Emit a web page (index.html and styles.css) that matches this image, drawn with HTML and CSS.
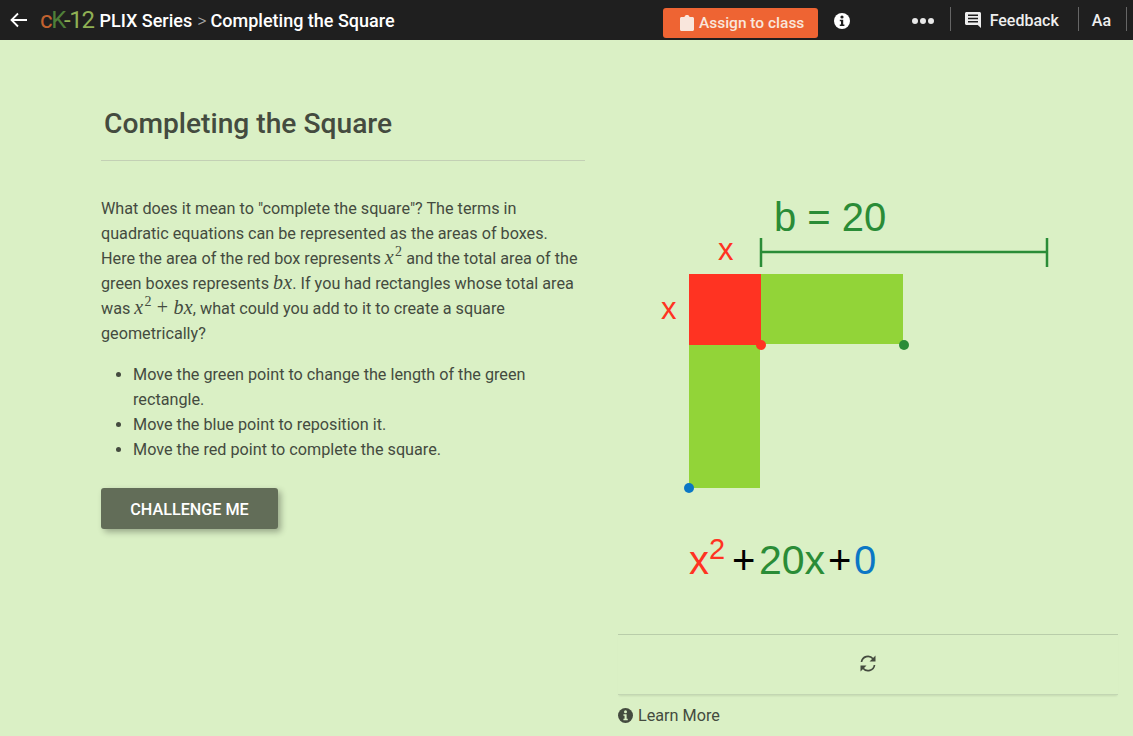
FILE: index.html
```html
<!DOCTYPE html>
<html lang="en">
<head>
  <meta charset="UTF-8" />
  <meta name="viewport" content="width=device-width, initial-scale=1.0"/>
  <title>Completing the Square</title>
  <link rel="stylesheet" href="styles.css">
</head>
<body>
  <header class="topbar">
    <svg class="back" width="18" height="16" viewBox="0 0 18 16"><path d="M17 8H2M8 1.500L1.500 8 8 14.500" fill="none" stroke="#fff" stroke-width="1.800"/></svg>
    <span class="logo"><span class="logo-c">c</span><span class="logo-k">K</span><span class="logo-num">-12</span></span>
    <span class="crumb">PLIX Series</span>
    <span class="crumb-sep">&gt;</span>
    <span class="crumb">Completing the Square</span>

    <div class="actions">
      <button class="assign">
        <svg width="14" height="16" viewBox="0 0 14 16"><path d="M1.500 2H4.500C4.700 .6 5.700 0 7 0s2.300 .6 2.500 2H12.500C13.300 2 14 2.700 14 3.500V14.500C14 15.300 13.300 16 12.500 16H1.500C.7 16 0 15.300 0 14.500V3.500C0 2.700 .7 2 1.500 2Z" fill="#f9e6dc"/></svg>
        Assign to class
      </button>
      <svg class="info" width="16" height="16" viewBox="0 0 16 16"><circle cx="8" cy="8" r="8" fill="#fff"/><circle cx="8" cy="4" r="1.600" fill="#1f1f1f"/><path d="M5.800 6.700H9.200V11.500H10.400V13H5.800V11.500H7V8.200H5.800Z" fill="#1f1f1f"/></svg>
      <span class="dots"><i></i><i></i><i></i></span>
      <span class="divider"></span>
      <svg class="fb-icon" width="16" height="16" viewBox="0 0 16 16"><path d="M1.500 0H14.500C15.300 0 16 .7 16 1.500V16L12.800 13H1.500C.7 13 0 12.300 0 11.500V1.500C0 .7 .7 0 1.500 0Z" fill="#eee"/><path d="M3 3.200H13M3 6.500H13M3 9.800H13" stroke="#1f1f1f" stroke-width="1.500"/></svg>
      <span class="action-text feedback">Feedback</span>
      <span class="divider second"></span>
      <span class="action-text font-size">Aa</span>
      <span class="divider last"></span>
    </div>
  </header>

  <main class="page">
    <section class="lesson">
      <h1>Completing the Square</h1>
      <p>What does it mean to "complete the square"? The terms in quadratic equations can be represented as the areas of boxes. Here the area of the red box represents <span class="math">x<sup>2</sup></span> and the total area of the green boxes represents <span class="math">bx</span>. If you had rectangles whose total area was <span class="math">x<sup>2</sup> <span class="op">+</span> bx</span>, what could you add to it to create a square geometrically?</p>
      <ul>
        <li>Move the green point to change the length of the green rectangle.</li>
        <li>Move the blue point to reposition it.</li>
        <li>Move the red point to complete the square.</li>
      </ul>
      <button class="challenge">CHALLENGE ME</button>
    </section>

    <section class="widget">
      <svg class="diagram" width="500" height="400" viewBox="0 0 500 400">
        <text class="label-b" x="156" y="41">b = 20</text>
        <path d="M143 62H429M143 48V77M429 48V77" fill="none" stroke="#2a8c37" stroke-width="2.500"/>
        <text class="label-x" x="100" y="70">x</text>
        <text class="label-x" x="43" y="129">x</text>
        <rect x="143" y="84" width="142" height="70" fill="#92d438"/>
        <rect x="71" y="155" width="71" height="143" fill="#92d438"/>
        <rect x="71" y="84" width="72" height="71" fill="#ff3322"/>
        <circle cx="143" cy="155" r="5" fill="#ff3322"/>
        <circle cx="286" cy="155" r="5" fill="#2a8c37"/>
        <circle cx="71" cy="298" r="5" fill="#0b77c5"/>
        <text class="eq" y="384">
          <tspan x="71" fill="#ff3322">x</tspan>
          <tspan x="91" y="369" class="eq-sup" fill="#ff3322">2</tspan>
          <tspan x="114" y="384" fill="#000">+</tspan>
          <tspan x="141" class="eq-mid" fill="#2a8c37">20x</tspan>
          <tspan x="210" fill="#000">+</tspan>
          <tspan x="236" fill="#0b77c5">0</tspan>
        </text>
      </svg>
      <div class="reset-row">
        <svg width="18" height="17" viewBox="0 0 18 17"><path d="M2.500 7A6.500 6.500 0 0 1 14 3.800M15.500 10A6.500 6.500 0 0 1 4 13.200" fill="none" stroke="#444b3f" stroke-width="1.700"/><path d="M16.500 .5V6.500H10.500ZM1.500 16.500V10.500H7.500Z" fill="#444b3f"/></svg>
      </div>
      <div class="learn-more">
        <svg width="15" height="15" viewBox="0 0 16 16"><circle cx="8" cy="8" r="8" fill="#444b3f"/><circle cx="8" cy="4" r="1.600" fill="#daf0c5"/><path d="M5.800 6.700H9.200V11.500H10.400V13H5.800V11.500H7V8.200H5.800Z" fill="#daf0c5"/></svg>
        Learn More
      </div>
    </section>
  </main>
</body>
</html>
```

FILE: styles.css
```css
* {
  box-sizing: border-box;
}
html, body {
  height: 100%;
}
body {
  margin: 0;
  background: #daf0c5;
  color: #444b3f;
  font-family: Roboto, "Liberation Sans", sans-serif;
  overflow: hidden;
}

.topbar {
  height: 40px;
  background: #1f1f1f;
  color: #fff;
  display: flex;
  align-items: center;
  padding-left: 10px;
}
.back {
  margin-right: 12px;
}
.logo {
  font-size: 24px;
  font-weight: 400;
  letter-spacing: -1.400px;
  margin-right: 6px;
}
.logo-c { color: #c2622f; }
.logo-k { color: #4f7f39; }
.logo-num { color: #8fb054; }
.crumb {
  font-size: 18px;
  font-weight: 500;
}
.crumb-sep {
  color: #aaa;
  font-size: 18px;
  font-weight: 300;
  margin: 0 4px 0 5px;
}
.actions {
  margin-left: auto;
  display: flex;
  align-items: center;
  height: 100%;
}
.assign {
  width: 155px;
  height: 30px;
  margin-top: 6px;
  padding: 0 0 0 4px;
  background: #ee6433;
  color: #f9e6dc;
  border: 0;
  border-radius: 3px;
  font-family: inherit;
  font-size: 15.500px;
  font-weight: 500;
  display: flex;
  align-items: center;
  justify-content: center;
  gap: 5px;
}
.info {
  margin-left: 16px;
  margin-top: 2px;
}
.dots {
  display: flex;
  gap: 2px;
  margin-left: 62px;
  margin-top: 2px;
}
.dots i {
  width: 6px;
  height: 6px;
  border-radius: 50%;
  background: #e8e8e8;
}
.divider {
  width: 1px;
  height: 24px;
  background: #666;
  margin-top: -2px;
  margin-left: 16px;
}
.fb-icon {
  margin-left: 14px;
  margin-top: -1px;
}
.action-text {
  font-size: 16px;
  font-weight: 500;
  color: #eee;
}
.feedback {
  margin-left: 9px;
}
.divider.second {
  margin-left: 19px;
}
.font-size {
  margin-left: 13px;
}
.divider.last {
  margin-left: 15px;
  margin-right: 6px;
}

.page {
  display: flex;
  padding-left: 101px;
}
.lesson {
  width: 484px;
  flex: none;
  padding-top: 62px;
}
h1 {
  margin: 0 0 35px;
  padding: 0 0 15px 3px;
  border-bottom: 1px solid #c3d0b5;
  font-size: 28.200px;
  line-height: 43px;
  font-weight: 500;
}
p {
  margin: 0;
  font-size: 16.200px;
  line-height: 25px;
}
ul {
  margin: 16px 0 0;
  padding-left: 32px;
  font-size: 16.200px;
  line-height: 25px;
}
.math {
  font-family: "Liberation Serif", serif;
  font-style: italic;
  font-size: 20px;
  letter-spacing: 0.2px;
  word-spacing: -1px;
  line-height: 1;
}
.math sup {
  font-style: normal;
  font-size: 14px;
  line-height: 0;
  margin-left: 1px;
}
.op {
  font-style: normal;
  margin: 0 1px;
}
.challenge {
  display: block;
  width: 177px;
  height: 41px;
  margin-top: 26px;
  padding: 2px 0 0;
  background: #626d58;
  color: #fff;
  border: 0;
  border-radius: 3px;
  box-shadow: 3px 3px 6px rgba(0, 0, 0, 0.3);
  font-family: inherit;
  font-size: 16.200px;
  font-weight: 500;
}

.widget {
  width: 500px;
  flex: none;
  margin-left: 33px;
  padding-top: 150px;
}
.diagram {
  display: block;
  font-family: "Liberation Sans", Arial, sans-serif;
}
.label-b {
  font-size: 40px;
  fill: #2a8c37;
}
.label-x {
  font-size: 31px;
  fill: #ff3322;
}
.eq {
  font-size: 40px;
}
.eq-sup {
  font-size: 29px;
}
.eq-mid {
  font-size: 41px;
}
.reset-row {
  height: 61px;
  margin-top: 44px;
  padding-bottom: 2px;
  border-top: 1px solid #b9cdaa;
  border-bottom: 1px solid #c3d6b3;
  box-shadow: 0 2px 2px -1px rgba(0, 0, 0, 0.1);
  display: flex;
  align-items: center;
  justify-content: center;
}
.learn-more {
  display: flex;
  align-items: center;
  gap: 5px;
  margin-top: 11px;
  font-size: 16.200px;
}
```
